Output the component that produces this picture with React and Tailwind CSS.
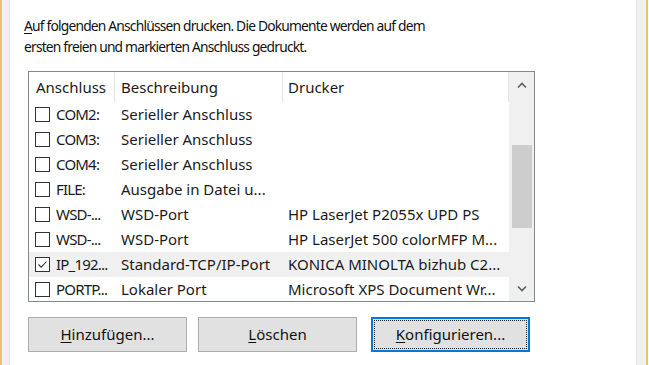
import React from 'react';

const rows = [
  { port: 'COM2:', desc: 'Serieller Anschluss', printer: '' },
  { port: 'COM3:', desc: 'Serieller Anschluss', printer: '' },
  { port: 'COM4:', desc: 'Serieller Anschluss', printer: '' },
  { port: 'FILE:', desc: 'Ausgabe in Datei u...', printer: '' },
  { port: 'WSD-...', desc: 'WSD-Port', printer: 'HP LaserJet P2055x UPD PS' },
  { port: 'WSD-...', desc: 'WSD-Port', printer: 'HP LaserJet 500 colorMFP M...' },
  { port: 'IP_192...', desc: 'Standard-TCP/IP-Port', printer: 'KONICA MINOLTA bizhub C2...', checked: true, selected: true },
  { port: 'PORTP...', desc: 'Lokaler Port', printer: 'Microsoft XPS Document Wr...' },
];

const CheckBox = ({ checked }) => (
  <span className="w-[15px] h-[15px] border border-[#333] bg-white flex items-center justify-center shrink-0">
    {checked && (
      <svg width="11" height="11" viewBox="0 0 11 11">
        <path d="M1.5 5.5 L4.2 8.2 L9.5 2.5" fill="none" stroke="#333" strokeWidth="1.1" />
      </svg>
    )}
  </span>
);

const Button = ({ hotkey, rest, focused }) => (
  <button
    className={
      'h-[35px] w-[159px] bg-[#e1e1e1] text-[15px] text-[#111] flex items-center justify-center ' +
      (focused ? 'border-2 border-[#0078d7] p-[1px]' : 'border border-[#adadad]')
    }
  >
    <span className={'w-full h-full flex items-center justify-center ' + (focused ? 'border border-dotted border-[#222]' : '')}>
      <span>
        <span className="underline underline-offset-2">{hotkey}</span>
        {rest}
      </span>
    </span>
  </button>
);

export default function App() {
  return (
    <div className="w-[649px] h-[365px] flex bg-white font-['Noto_Sans',sans-serif] text-[#1a1a1a] overflow-hidden">
      <div className="w-[2px] bg-[#eebf73]" />
      <div className="w-[8px] bg-[#f0f0f0] border-r border-[#e6e6e6]" />
      <div className="flex-1 bg-white pl-[14px] pt-[15px]">
        <p className="text-[13.8px] tracking-[-0.8px] leading-[21px] whitespace-nowrap text-[#111]">
          <span className="underline underline-offset-2">A</span>uf folgenden Anschlüssen drucken. Die Dokumente werden auf dem
          <br />
          ersten freien und markierten Anschluss gedruckt.
        </p>

        <div className="mt-[14px] ml-[4px] w-[507px] h-[231px] border border-[#828790] flex overflow-hidden">
          <div className="flex-1 flex flex-col">
            <div className="flex h-[30px] shrink-0 text-[15px] items-center">
              <div className="w-[86px] h-full pl-[7px] flex items-center border-r border-[#e5e5e5]">Anschluss</div>
              <div className="w-[168px] h-full pl-[6px] flex items-center border-r border-[#e5e5e5]">Beschreibung</div>
              <div className="flex-1 h-full pl-[5px] flex items-center border-r border-[#e5e5e5]">Drucker</div>
            </div>
            {rows.map((r, i) => (
              <div
                key={i}
                className={'flex h-[25px] shrink-0 items-center text-[15px] whitespace-nowrap ' + (r.selected ? 'bg-[#f0f0f0]' : '')}
              >
                <div className="w-[86px] pl-[6px] flex items-center gap-[6px] overflow-hidden">
                  <CheckBox checked={r.checked} />
                  <span className="tracking-[-0.8px]">{r.port}</span>
                </div>
                <div className="w-[168px] pl-[6px] overflow-hidden">{r.desc}</div>
                <div className="flex-1 pl-[5px] overflow-hidden">{r.printer}</div>
              </div>
            ))}
          </div>
          <div className="w-[25px] bg-[#f0f0f0] flex flex-col items-center">
            <div className="h-[26px] w-full flex items-center justify-center">
              <svg width="10" height="7" viewBox="0 0 10 7">
                <path d="M1 5.5 L5 1.5 L9 5.5" fill="none" stroke="#606060" strokeWidth="1.6" />
              </svg>
            </div>
            <div className="h-[47px]" />
            <div className="w-[20px] h-[83px] bg-[#cdcdcd]" />
            <div className="flex-1" />
            <div className="h-[26px] w-full flex items-center justify-center">
              <svg width="10" height="7" viewBox="0 0 10 7">
                <path d="M1 1.5 L5 5.5 L9 1.5" fill="none" stroke="#606060" strokeWidth="1.6" />
              </svg>
            </div>
          </div>
        </div>

        <div className="mt-[15px] ml-[4px] flex">
          <Button hotkey="H" rest="inzufügen..." />
          <div className="w-[11px]" />
          <Button hotkey="L" rest="öschen" />
          <div className="w-[14px]" />
          <Button hotkey="K" rest="onfigurieren..." focused />
        </div>
      </div>
      <div className="w-[10px] bg-[#f0f0f0] border-l border-[#e6e6e6]" />
      <div className="w-[2px] bg-[#eebf73]" />
      <div className="w-[1px] bg-white" />
    </div>
  );
}
